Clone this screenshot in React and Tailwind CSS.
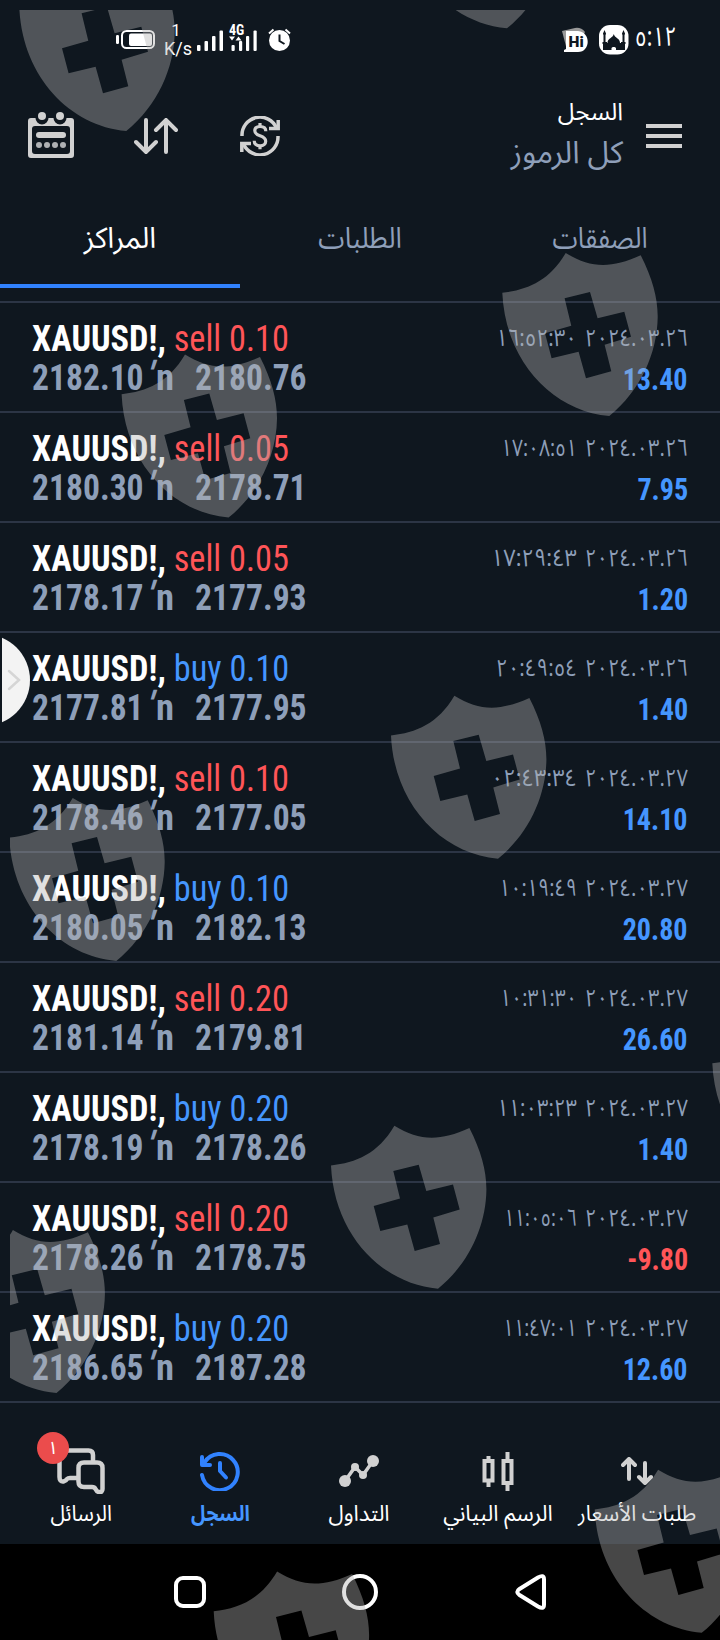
import React from 'react';
import clsx from 'clsx';

const positions = [
  { side: 'sell', volume: '0.10', open: '2182.10', close: '2180.76', date: '٢٠٢٤.٠٣.٢٦', time: '١٦:٥٢:٣٠', timeWidth: 80, profit: '13.40' },
  { side: 'sell', volume: '0.05', open: '2180.30', close: '2178.71', date: '٢٠٢٤.٠٣.٢٦', time: '١٧:٠٨:٥١', timeWidth: 75, profit: '7.95' },
  { side: 'sell', volume: '0.05', open: '2178.17', close: '2177.93', date: '٢٠٢٤.٠٣.٢٦', time: '١٧:٢٩:٤٣', timeWidth: 85, profit: '1.20' },
  { side: 'buy', volume: '0.10', open: '2177.81', close: '2177.95', date: '٢٠٢٤.٠٣.٢٦', time: '٢٠:٤٩:٥٤', timeWidth: 80, profit: '1.40' },
  { side: 'sell', volume: '0.10', open: '2178.46', close: '2177.05', date: '٢٠٢٤.٠٣.٢٧', time: '٠٢:٤٣:٣٤', timeWidth: 85, profit: '14.10' },
  { side: 'buy', volume: '0.10', open: '2180.05', close: '2182.13', date: '٢٠٢٤.٠٣.٢٧', time: '١٠:١٩:٤٩', timeWidth: 77, profit: '20.80' },
  { side: 'sell', volume: '0.20', open: '2181.14', close: '2179.81', date: '٢٠٢٤.٠٣.٢٧', time: '١٠:٣١:٣٠', timeWidth: 76, profit: '26.60' },
  { side: 'buy', volume: '0.20', open: '2178.19', close: '2178.26', date: '٢٠٢٤.٠٣.٢٧', time: '١١:٠٣:٢٣', timeWidth: 79, profit: '1.40' },
  { side: 'sell', volume: '0.20', open: '2178.26', close: '2178.75', date: '٢٠٢٤.٠٣.٢٧', time: '١١:٠٥:٠٦', timeWidth: 72, profit: '-9.80' },
  { side: 'buy', volume: '0.20', open: '2186.65', close: '2187.28', date: '٢٠٢٤.٠٣.٢٧', time: '١١:٤٧:٠١', timeWidth: 73, profit: '12.60' },
];

// unscaled advance of an HH:MM:SS string at 24px
const TIME_ADVANCE = 94;

// top-left corner of every shield stamped over the screen
const shields = [
  [19.3, -32],
  [400, -134.7],
  [502.3, 253],
  [121.6, 354.6],
  [391, 695.7],
  [9.3, 798],
  [712.3, 1023.5],
  [331, 1125.7],
  [-50.5, 1230],
  [213.7, 1571.6],
  [594.7, 1469.8],
];

function ShieldOverlay() {
  return (
    <svg className="pointer-events-none absolute inset-0" width="720" height="1640" viewBox="0 0 720 1640">
      <defs>
        <clipPath id="stampArea">
          <rect x="10" y="10" width="710" height="1630" />
        </clipPath>
        <path
          id="shield"
          fillRule="evenodd"
          d="M0 39.7C25 37 47 28 63.4 0C88 15 108 16 138.4 2.3C150 25 155.5 45 155.4 64C155 100 138 138 107 163C50 158 3 108 0 39.7ZM62.3 45.3L69 72.7L42.7 80.3L49.3 105.3L76.3 98.7L83.7 125.3L109 118.3L102.3 91.7L128.7 83.7L122 58.7L95.3 65.3L87.7 39Z"
        />
      </defs>
      <g clipPath="url(#stampArea)" fill="#b2b2b2" fillOpacity="0.4">
        {shields.map(([x, y]) => (
          <use key={`${x}-${y}`} href="#shield" x={x} y={y} />
        ))}
      </g>
    </svg>
  );
}

function StatusBar() {
  return (
    <div className="flex h-20 items-start justify-between pr-[43px] pl-[116px] text-white">
      <div className="flex pt-[24px]">
        <svg width="40" height="32" viewBox="0 0 40 32" fill="none">
          <rect x="6" y="7" width="32" height="17" rx="4.5" stroke="#fff" strokeWidth="2" />
          <rect x="13" y="9.5" width="23" height="12.5" rx="2" fill="#fff" />
          <rect x="0" y="11" width="3" height="9" rx="1.2" fill="#fff" />
        </svg>
        <div className="ml-[8px] w-[28px] text-center font-['Roboto'] text-[18px] leading-[20px]">
          <div className="-mt-[4px] pr-1 text-[17px]">1</div>
          <div className="-mt-px">K/s</div>
        </div>
        <svg className="ml-[4px] overflow-visible" width="62" height="32" viewBox="0 0 62 32" fill="#fff">
          <rect x="1" y="21" width="3.5" height="6" rx="1" />
          <rect x="8.5" y="17" width="3.5" height="10" rx="1" />
          <rect x="16" y="12" width="3.5" height="15" rx="1" />
          <rect x="23.5" y="6.5" width="3.5" height="20.5" rx="1" />
          <rect x="35.5" y="21" width="3.2" height="6" rx="1" />
          <rect x="43" y="17" width="3.2" height="10" rx="1" />
          <rect x="50" y="12" width="3.2" height="15" rx="1" />
          <rect x="57.5" y="6.5" width="3.2" height="20.5" rx="1" />
          <path d="M33 12.5h6l-3 4zM39.500 16.500h6l-3-4z" />
          <text x="33" y="11" fontSize="14" fontWeight="700" fontFamily="Roboto" className="font-stretch-condensed">
            4G
          </text>
        </svg>
        <svg className="ml-[9px]" width="26" height="30" viewBox="0 0 26 30" fill="none">
          <circle cx="12.5" cy="16.5" r="10.5" fill="#fff" />
          <path d="M2 9.500L6.500 5.500M23 9.500L18.500 5.500" stroke="#fff" strokeWidth="2" />
          <path d="M12.500 10.500V17L17.500 20" stroke="#0f171f" strokeWidth="2" />
        </svg>
      </div>
      <div className="flex pt-[24px]">
        <svg width="30" height="32" viewBox="0 0 30 32">
          <path d="M1 7L14 4Q20 3 24 8L18 20L6 26Z" fill="#999" />
          <path d="M5 7H17C30 8 30 28 17 28H3V26L5 25Z" fill="#fff" />
          <text x="7.5" y="22.5" fontSize="15.5" fontWeight="900" fontFamily="Roboto" fill="#0f171f">
            Hi
          </text>
        </svg>
        <svg className="ml-[8px]" width="30" height="32" viewBox="0 0 30 32">
          <rect x="0" y="1" width="29.5" height="29.5" rx="11" fill="#fff" />
          <path
            d="M4 26V20H3.500V18H4.500V10.500H4V9.500L5.500 6L7 9.500V10.500H6.500V18H8V19H8.500C8.500 14 14 14 14.800 10C15.500 14 21 14 21 19H22V18H23.500V10.500H23V9.500L24.500 6L26 9.500V10.500H25.500V18H26.500V20H26V26H17V24C16.500 22.500 13 22.500 12.500 24V26Z"
            fill="#0f171f"
          />
        </svg>
        <div className="ml-[7px] flex w-[41px] justify-end">
          <div className="origin-right scale-x-78 font-['Noto_Sans_Arabic','DejaVu_Sans',sans-serif] text-[27px] leading-[28px]">
            ٥:١٢
          </div>
        </div>
      </div>
    </div>
  );
}

function Header() {
  return (
    <div className="flex h-[110px] items-start justify-between pr-[38px] pl-[28px] text-[#d1d1d1]">
      <div className="flex pt-[32px]">
        <svg width="46" height="46" viewBox="0 0 46 46">
          <path
            fillRule="evenodd"
            fill="#d1d1d1"
            d="M3 6H7.500A6.500 6.500 0 0 0 20.500 6H25.500A6.500 6.500 0 0 0 38.500 6H43Q46 6 46 9V43Q46 46 43 46H3Q0 46 0 43V9Q0 6 3 6ZM7 14Q4 14 4 17V39Q4 42 7 42H39Q42 42 42 39V17Q42 14 39 14Z"
          />
          <g fill="#d1d1d1">
            <circle cx="14" cy="4" r="4" />
            <circle cx="32" cy="4" r="4" />
            <rect x="8" y="20" width="30" height="6" rx="3" />
            <g fill="#afb1b4">
              <circle cx="11" cy="33" r="3" />
              <circle cx="19" cy="33" r="3" />
              <circle cx="27" cy="33" r="3" />
              <circle cx="35" cy="33" r="3" />
            </g>
          </g>
        </svg>
        <svg className="mt-[6px] ml-[60px]" width="44" height="36" viewBox="0 0 44 36" fill="none" stroke="#d1d1d1" strokeWidth="4" strokeLinecap="round">
          <path d="M12 2V34M2 24L12 34L22 24M32 34V2M22 12L32 2L42 12" />
        </svg>
        <svg className="mt-[4px] ml-[62px]" width="40" height="40" viewBox="0 0 40 40" fill="none" stroke="#d1d1d1" strokeWidth="3.5">
          <path d="M2 20A18 18 0 0 1 36.500 12M38 20A18 18 0 0 1 3.500 28" />
          <path d="M38.200 4V12.500H29M1.800 36V27.500H11" />
          <path
            strokeWidth="3.2"
            d="M25.800 15.200C25.800 11.800 23.300 10.500 20 10.500C16.700 10.500 14.800 12.200 14.800 14.700C14.800 17.500 17 18.800 20 19.800C23.500 21 25.700 22.300 25.700 25.300C25.700 28 23.500 29.800 20.200 29.800C16.500 29.800 14.200 28.300 14.200 24.800M20 7V11M20 29.500V33.200"
          />
        </svg>
      </div>
      <div className="flex" dir="rtl">
        <div className="mt-[44px] flex h-6 w-9 flex-col justify-between">
          <div className="h-1 bg-[#d1d1d1]" />
          <div className="h-1 bg-[#d1d1d1]" />
          <div className="h-1 bg-[#d1d1d1]" />
        </div>
        <div className="mr-[23px] pt-[14px] font-['Noto_Sans_Arabic','DejaVu_Sans',sans-serif] whitespace-nowrap">
          <div className="text-[24px] leading-[38px] text-white">السجل</div>
          <div className="text-[31px] leading-[42px] text-[#8e9fb9]">كل الرموز</div>
        </div>
      </div>
    </div>
  );
}

function Tabs() {
  return (
    <div className="grid h-[98px] grid-cols-3 font-['Noto_Sans_Arabic','DejaVu_Sans',sans-serif] text-[29px] leading-[97px] text-[#8e9fb9]">
      <div className="h-[98px] border-b-4 border-[#3182fe] text-center text-white">المراكز</div>
      <div className="scale-x-92 text-center">الطلبات</div>
      <div className="scale-x-88 text-center">الصفقات</div>
    </div>
  );
}

function PositionRow({ position }) {
  const { side, volume, open, close, date, time, timeWidth, profit } = position;
  return (
    <div className="flex h-[110px] justify-between border-b-2 border-[#2c3545] pt-4 pr-8 pl-8 font-['Roboto_Condensed','Roboto',sans-serif] font-stretch-condensed">
      <div className="text-[36.5px] leading-[39px] whitespace-pre">
        <div className="origin-left scale-x-94">
          <span className="font-bold text-white">XAUUSD!, </span>
          <span className={side === 'sell' ? 'text-[#ff5558]' : 'text-[#4596ff]'}>
            {side} {volume}
          </span>
        </div>
        <div className="flex font-bold text-[#8e9fb9]">
          <span className="w-[119px] origin-left scale-x-92">{open}</span>
          <span className="w-[44px]">
            <span className="-ml-[3px] inline-block w-[8px] -translate-y-[3px] -skew-x-16">′</span>n
          </span>
          <span className="origin-left scale-x-92">{close}</span>
        </div>
      </div>
      <div className="flex flex-col items-end">
        <div
          className="flex font-['Noto_Sans_Arabic','DejaVu_Sans',sans-serif] text-[24px] leading-[39px] whitespace-nowrap text-[#8e9fb9]"
          dir="rtl"
        >
          <div className="w-[111px]">
            <div className="w-[122px] origin-right scale-x-84">{date}</div>
          </div>
          <div className="w-[94px] origin-right" style={{ transform: `scaleX(${timeWidth / TIME_ADVANCE})` }}>
            {time}
          </div>
        </div>
        <div
          className={clsx(
            'origin-right scale-x-92 text-[30.5px] leading-[43px] font-bold',
            profit.startsWith('-') ? 'text-[#ff5558]' : 'text-[#4596ff]'
          )}
        >
          {profit}
        </div>
      </div>
    </div>
  );
}

function NavItem({ label, active, labelClass, children }) {
  return (
    <div className="flex w-[139px] flex-col items-center">
      <div className="relative flex h-[56px] items-center justify-center">{children}</div>
      <div
        className={clsx(
          "font-['Noto_Sans_Arabic','DejaVu_Sans',sans-serif] text-[22px] leading-[30px] whitespace-nowrap",
          active ? 'font-bold text-[#4596ff]' : 'text-white',
          labelClass
        )}
      >
        {label}
      </div>
    </div>
  );
}

function BottomNav() {
  return (
    <div className="flex h-[141px] justify-center pt-[40px] pr-[2px]">
      <NavItem label="الرسائل" labelClass="scale-x-95">
        <svg width="48" height="46" viewBox="0 0 48 46" fill="none" stroke="#d1d1d1" strokeWidth="4.5" strokeLinejoin="round">
          <path d="M36 14V7Q36 2.500 31.500 2.500H7Q2.500 2.500 2.500 7V29Q2.500 34 6.500 33.500Q9 33 10 31Q11 30 13 30H21" />
          <path d="M27 14.500H40Q45.500 14.500 45.500 20V41Q45.500 44.500 42 44Q40 44 38.500 41Q37.500 39 35 39H27Q21.500 39 21.500 33.500V20Q21.500 14.500 27 14.500Z" />
        </svg>
        <div className="absolute -top-[11px] -left-[20px] flex size-8 items-center justify-center rounded-full bg-[#eb4c4c] font-['Noto_Sans_Arabic','DejaVu_Sans',sans-serif] text-[18px] text-white">
          ١
        </div>
      </NavItem>
      <NavItem label="السجل" active labelClass="scale-x-88">
        <svg width="40" height="40" viewBox="0 0 40 40" fill="none" stroke="#3182fe" strokeWidth="4" strokeLinecap="round" strokeLinejoin="round">
          <path d="M2 24A18 18 0 1 0 4.500 11.500" />
          <path d="M2 6V14H10M20 12V20L26 26.500" />
        </svg>
      </NavItem>
      <NavItem label="التداول">
        <svg width="40" height="34" viewBox="0 0 40 34" stroke="#d1d1d1" strokeWidth="3.5" fill="none">
          <path d="M6 27L16 13L24 21L34 7" />
          <g fill="#d1d1d1" stroke="none">
            <circle cx="6" cy="27" r="6" />
            <circle cx="16" cy="13" r="4" />
            <circle cx="24" cy="21" r="4" />
            <circle cx="34" cy="7" r="6" />
          </g>
        </svg>
      </NavItem>
      <NavItem label="الرسم البياني">
        <svg width="32" height="40" viewBox="0 0 32 40" fill="none" stroke="#d1d1d1" strokeWidth="4">
          <path d="M2.500 10H10.500V29.500H2.500ZM6.500 5V10M6.500 30V36M21.500 10H29.500V32H21.500ZM25.500 1V10M25.500 32V40" />
        </svg>
      </NavItem>
      <NavItem label="طلبات الأسعار" labelClass="scale-x-95">
        <svg width="32" height="28" viewBox="0 0 32 28" fill="none" stroke="#d1d1d1" strokeWidth="4" strokeLinecap="round" strokeLinejoin="round">
          <path d="M8 22V2M2 8L8 2L14 8M24 6V26M18 20L24 26L30 20" />
        </svg>
      </NavItem>
    </div>
  );
}

function SystemNav() {
  return (
    <div className="flex h-24 items-center justify-between bg-black pr-[173px] pl-[174px]">
      <div className="size-8 rounded-[9px] border-4 border-white" />
      <div className="-ml-px size-9 rounded-full border-4 border-white" />
      <svg width="32" height="36" viewBox="0 0 32 36" fill="none" stroke="#fff" strokeWidth="4" strokeLinejoin="round">
        <path d="M23 3.500Q29 0 29 5.500V30.500Q29 36 23 32.500L4.500 21Q0 18 4.500 15Z" />
      </svg>
    </div>
  );
}

export default function App() {
  return (
    <div className="relative h-[1640px] w-[720px] overflow-hidden bg-[#0f171f]">
      <StatusBar />
      <Header />
      <Tabs />
      <div className="mt-[13px] border-t-2 border-[#2c3545]">
        {positions.map((position) => (
          <PositionRow key={position.time} position={position} />
        ))}
      </div>
      <BottomNav />
      <SystemNav />
      <ShieldOverlay />
      <div className="absolute top-[634px] left-[2px] h-[94px] w-7 overflow-hidden">
        <div className="absolute right-0 size-[92px] rounded-full bg-[#f3f3f3]" />
        <svg className="absolute top-[35px] left-[5px]" width="15" height="22" viewBox="0 0 15 22" fill="none" stroke="#d5d5d5" strokeWidth="2.5" strokeLinecap="round">
          <path d="M2 2L12 11L2 20" />
        </svg>
      </div>
    </div>
  );
}
